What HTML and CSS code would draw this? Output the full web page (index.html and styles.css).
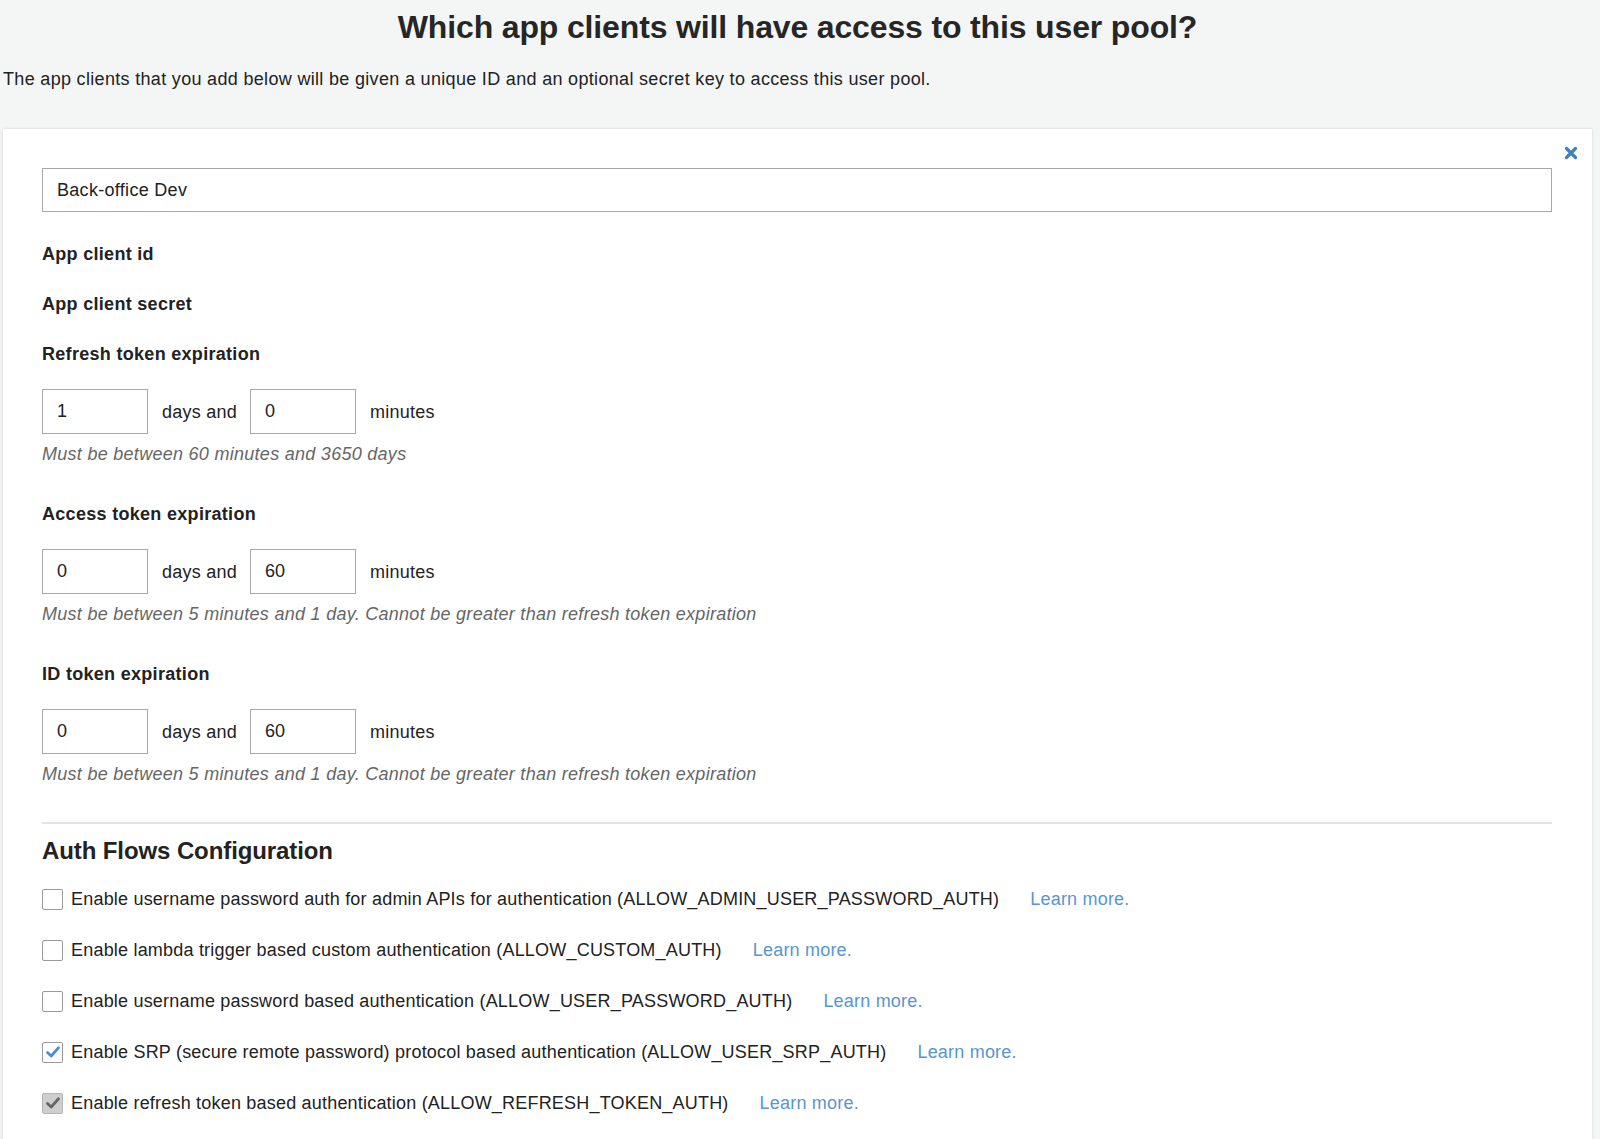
FILE: index.html
```html
<!DOCTYPE html>
<html lang="en">
<head>
<meta charset="utf-8">
<title>App clients</title>
<link rel="stylesheet" href="styles.css">
</head>
<body>
<div class="page">
  <h1 class="title">Which app clients will have access to this user pool?</h1>
  <p class="intro">The app clients that you add below will be given a unique ID and an optional secret key to access this user pool.</p>

  <div class="card">
    <button class="close" aria-label="Remove">
      <svg width="14" height="14" viewBox="0 0 14 14"><path d="M2.5 2.5 L11.5 11.5 M11.5 2.5 L2.5 11.5" stroke="#3f80c0" stroke-width="3.2" stroke-linecap="round"/></svg>
    </button>

    <input class="name-input" type="text" value="Back-office Dev">

    <div class="label first">App client id</div>
    <div class="label">App client secret</div>

    <div class="label">Refresh token expiration</div>
    <div class="token-row">
      <input class="num" type="text" value="1"><span class="unit">days and</span>
      <input class="num" type="text" value="0"><span class="unit">minutes</span>
    </div>
    <div class="hint">Must be between 60 minutes and 3650 days</div>

    <div class="label section">Access token expiration</div>
    <div class="token-row">
      <input class="num" type="text" value="0"><span class="unit">days and</span>
      <input class="num" type="text" value="60"><span class="unit">minutes</span>
    </div>
    <div class="hint">Must be between 5 minutes and 1 day. Cannot be greater than refresh token expiration</div>

    <div class="label section">ID token expiration</div>
    <div class="token-row">
      <input class="num" type="text" value="0"><span class="unit">days and</span>
      <input class="num" type="text" value="60"><span class="unit">minutes</span>
    </div>
    <div class="hint">Must be between 5 minutes and 1 day. Cannot be greater than refresh token expiration</div>

    <hr class="divider">

    <h2 class="subtitle">Auth Flows Configuration</h2>

    <div class="flows">
      <div class="flow">
        <span class="cb"></span>
        <span class="flow-text">Enable username password auth for admin APIs for authentication (ALLOW_ADMIN_USER_PASSWORD_AUTH)</span>
        <a class="learn" href="#">Learn more.</a>
      </div>
      <div class="flow">
        <span class="cb"></span>
        <span class="flow-text">Enable lambda trigger based custom authentication (ALLOW_CUSTOM_AUTH)</span>
        <a class="learn" href="#">Learn more.</a>
      </div>
      <div class="flow">
        <span class="cb"></span>
        <span class="flow-text">Enable username password based authentication (ALLOW_USER_PASSWORD_AUTH)</span>
        <a class="learn" href="#">Learn more.</a>
      </div>
      <div class="flow">
        <span class="cb checked">
          <svg width="16" height="16" viewBox="0 0 16 16"><path d="M2.5 8.5 L6.2 12 L13.5 3.8" fill="none" stroke="#4a90d6" stroke-width="2.8" stroke-linecap="round" stroke-linejoin="round"/></svg>
        </span>
        <span class="flow-text">Enable SRP (secure remote password) protocol based authentication (ALLOW_USER_SRP_AUTH)</span>
        <a class="learn" href="#">Learn more.</a>
      </div>
      <div class="flow">
        <span class="cb disabled">
          <svg width="16" height="16" viewBox="0 0 16 16"><path d="M2.5 8.5 L6.2 12 L13.5 3.8" fill="none" stroke="#666" stroke-width="2.8" stroke-linecap="round" stroke-linejoin="round"/></svg>
        </span>
        <span class="flow-text">Enable refresh token based authentication (ALLOW_REFRESH_TOKEN_AUTH)</span>
        <a class="learn" href="#">Learn more.</a>
      </div>
    </div>
  </div>
</div>
</body>
</html>
```

FILE: styles.css
```css
html, body {
  margin: 0;
  padding: 0;
  background: #f4f6f6;
  font-family: "Liberation Sans", Arial, Helvetica, sans-serif;
  color: #222;
}

.page {
  padding: 0 8px 0 3px;
}

.title {
  margin: 8px 0 0;
  font-size: 32px;
  line-height: 38px;
  font-weight: bold;
  letter-spacing: -0.15px;
  text-align: center;
  color: #262626;
}

.intro {
  margin: 22px 0 0;
  font-size: 18px;
  line-height: 22px;
  letter-spacing: 0.32px;
  color: #222;
}

.card {
  position: relative;
  margin-top: 39px;
  background: #fff;
  box-shadow: 0 0 3px rgba(0, 0, 0, 0.14);
  padding: 39px 40px 60px 39px;
}

.close {
  position: absolute;
  top: 17px;
  right: 14px;
  width: 14px;
  height: 14px;
  padding: 0;
  border: 0;
  background: none;
  display: flex;
}

.name-input {
  display: block;
  box-sizing: border-box;
  width: 100%;
  height: 44px;
  margin: 0;
  padding: 0 14px;
  border: 1px solid #a8a8a8;
  font-family: inherit;
  font-size: 18px;
  letter-spacing: 0.3px;
  color: #222;
  background: #fff;
}

.label {
  font-size: 18px;
  line-height: 22px;
  font-weight: bold;
  letter-spacing: 0.3px;
  margin-top: 28px;
}

.label.first {
  margin-top: 31px;
}

.label.section {
  margin-top: 38px;
}

.token-row {
  display: flex;
  align-items: center;
  margin-top: 24px;
}

.num {
  box-sizing: border-box;
  width: 106px;
  height: 45px;
  margin: 0;
  padding: 0 14px;
  border: 1px solid #a8a8a8;
  font-family: inherit;
  font-size: 18px;
  color: #222;
  background: #fff;
}

.unit {
  font-size: 18px;
  line-height: 22px;
  letter-spacing: 0.25px;
  margin: 0 13px 0 14px;
}

.hint {
  margin-top: 9px;
  font-size: 18px;
  line-height: 22px;
  font-style: italic;
  letter-spacing: 0.28px;
  color: #666;
}

.divider {
  margin: 37px 0 0;
  border: 0;
  border-top: 2px solid #e4e4e4;
}

.subtitle {
  margin: 13px 0 0;
  font-size: 24px;
  line-height: 28px;
  font-weight: bold;
  letter-spacing: -0.1px;
  color: #222;
}

.flows {
  display: flex;
  flex-direction: column;
  gap: 29px;
  margin-top: 23px;
}

.flow {
  display: flex;
  align-items: center;
  height: 22px;
  font-size: 18px;
  line-height: 22px;
}

.cb {
  box-sizing: border-box;
  width: 21px;
  height: 21px;
  border: 1px solid #9a9a9a;
  border-radius: 2px;
  background: #fff;
  margin-right: 8px;
  display: flex;
  align-items: center;
  justify-content: center;
  flex: none;
}

.cb.disabled {
  background: #cfcfcf;
  border-color: #b4b4b4;
}

.flow-text {
  letter-spacing: 0.2px;
  color: #222;
}

.learn {
  margin-left: 31px;
  letter-spacing: 0.2px;
  color: #5796cf;
  text-decoration: none;
}
```
